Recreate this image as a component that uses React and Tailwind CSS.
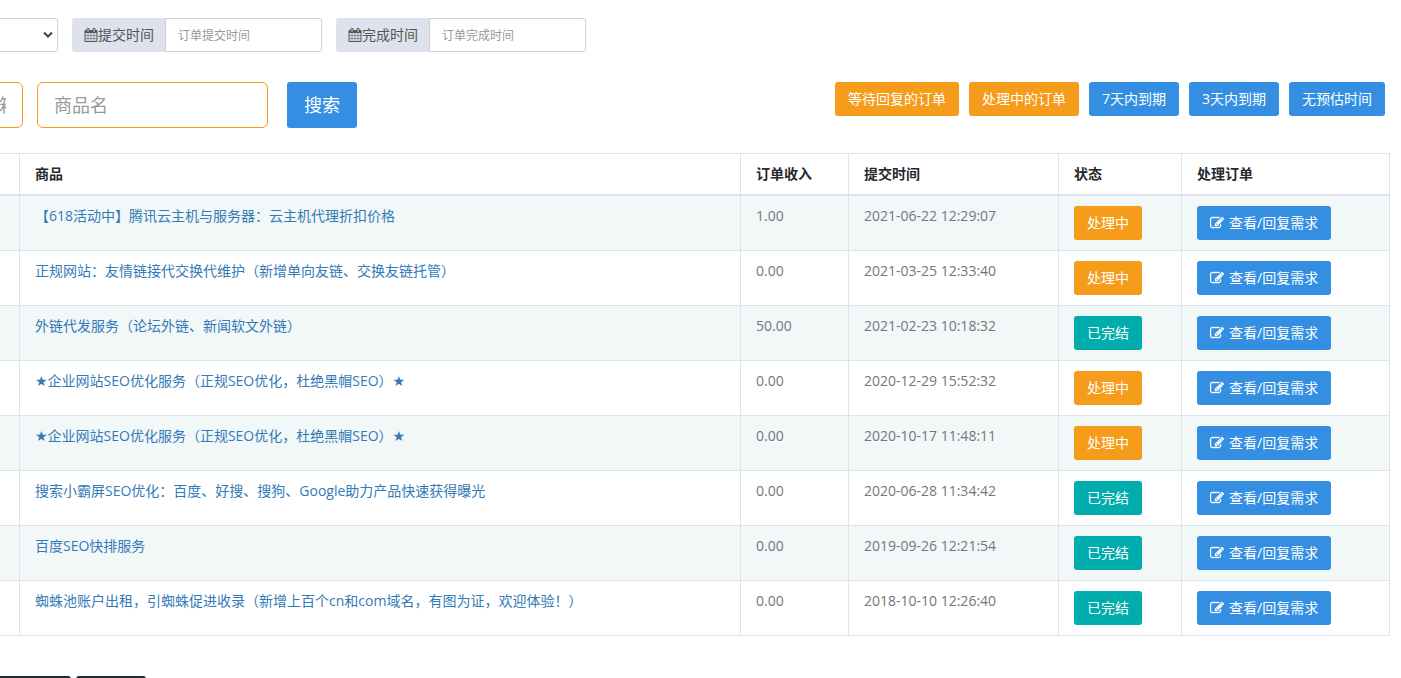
import React, { useState } from 'react';

const orders = [
  { id: 1, title: '【618活动中】腾讯云主机与服务器：云主机代理折扣价格', income: '1.00', time: '2021-06-22 12:29:07', done: false },
  { id: 2, title: '正规网站：友情链接代交换代维护（新增单向友链、交换友链托管）', income: '0.00', time: '2021-03-25 12:33:40', done: false },
  { id: 3, title: '外链代发服务（论坛外链、新闻软文外链）', income: '50.00', time: '2021-02-23 10:18:32', done: true },
  { id: 4, title: '★企业网站SEO优化服务（正规SEO优化，杜绝黑帽SEO）★', income: '0.00', time: '2020-12-29 15:52:32', done: false },
  { id: 5, title: '★企业网站SEO优化服务（正规SEO优化，杜绝黑帽SEO）★', income: '0.00', time: '2020-10-17 11:48:11', done: false },
  { id: 6, title: '搜索小霸屏SEO优化：百度、好搜、搜狗、Google助力产品快速获得曝光', income: '0.00', time: '2020-06-28 11:34:42', done: true },
  { id: 7, title: '百度SEO快排服务', income: '0.00', time: '2019-09-26 12:21:54', done: true },
  { id: 8, title: '蜘蛛池账户出租，引蜘蛛促进收录（新增上百个cn和com域名，有图为证，欢迎体验！）', income: '0.00', time: '2018-10-10 12:26:40', done: true },
];

const quickFilters = [
  { label: '等待回复的订单', color: 'bg-[#f59c1a]' },
  { label: '处理中的订单', color: 'bg-[#f59c1a]' },
  { label: '7天内到期', color: 'bg-[#348fe2]' },
  { label: '3天内到期', color: 'bg-[#348fe2]' },
  { label: '无预估时间', color: 'bg-[#348fe2]' },
];

const CalendarIcon = () => (
  <svg className="w-[14px] h-[14px] shrink-0" viewBox="0 0 1792 1792" fill="currentColor" aria-hidden="true">
    <path d="M192 1664h288v-288h-288v288zm352 0h320v-288h-320v288zm-352-352h288v-320h-288v320zm352 0h320v-320h-320v320zm-352-384h288v-288h-288v288zm736 736h320v-288h-320v288zm-384-736h320v-288h-320v288zm768 736h288v-288h-288v288zm-384-352h320v-320h-320v320zm-352-864v-288q0-13-9.5-22.5t-22.5-9.5h-64q-13 0-22.5 9.5t-9.5 22.5v288q0 13 9.5 22.5t22.5 9.5h64q13 0 22.5-9.5t9.5-22.5zm736 864h288v-320h-288v320zm-384-384h320v-288h-320v288zm384 0h288v-288h-288v288zm32-480v-288q0-13-9.5-22.5t-22.5-9.5h-64q-13 0-22.5 9.5t-9.5 22.5v288q0 13 9.5 22.5t22.5 9.5h64q13 0 22.5-9.5t9.5-22.5zm384-64v1280q0 52-38 90t-90 38h-1408q-52 0-90-38t-38-90v-1280q0-52 38-90t90-38h128v-96q0-66 47-113t113-47h64q66 0 113 47t47 113v96h384v-96q0-66 47-113t113-47h64q66 0 113 47t47 113v96h128q52 0 90 38t38 90z" />
  </svg>
);

const EditIcon = () => (
  <svg
    className="w-[14px] h-[14px] shrink-0"
    viewBox="0 0 1792 1792"
    fill="currentColor"
    stroke="currentColor"
    strokeWidth="50"
    aria-hidden="true"
  >
    <path d="M888 1184l116-116-152-152-116 116v56h96v96h56zm440-720q-16-16-33 1l-350 350q-17 17-1 33t33-1l350-350q17-17 1-33zm80 594v190q0 119-84.5 203.5t-203.5 84.5h-832q-119 0-203.5-84.5t-84.5-203.5v-832q0-119 84.5-203.5t203.5-84.5h832q63 0 117 25 15 7 18 23 3 17-9 29l-49 49q-14 14-32 8-23-6-45-6h-832q-66 0-113 47t-47 113v832q0 66 47 113t113 47h832q66 0 113-47t47-113v-126q0-13 9-22l64-64q15-15 35-7t20 29zm-96-738l288 288-672 672h-288v-288zm444 132l-92 92-288-288 92-92q28-28 68-28t68 28l152 152q28 28 28 68t-28 68z" />
  </svg>
);

const DateFilter = ({ id, label, placeholder }) => (
  <div className="flex h-[34px] w-[250px]">
    <label htmlFor={id} className="flex items-center px-3 rounded-l-[3px] bg-[#dee2ed] text-[#555555]">
      <CalendarIcon />
      {label}
    </label>
    <input
      id={id}
      type="text"
      placeholder={placeholder}
      className="flex-1 min-w-0 -ml-px px-3 pt-[2px] text-xs rounded-r-[3px] border border-[#ccd0d8] bg-white placeholder-[#999999] focus:outline-none"
    />
  </div>
);

const headCell = 'px-[15px] py-[10px] leading-5 text-left font-bold text-[#242a30] border border-b-2 border-[#dee2ed]';
const bodyCell = 'px-[15px] py-[10px] align-top leading-5 border border-[#dee2ed]';

const App = () => {
  const [product, setProduct] = useState('');

  return (
    <div
      className="h-screen overflow-hidden bg-white text-sm text-[#6f7780] font-['Open_Sans','DejaVu_Sans','Noto_Sans_CJK_SC',sans-serif]"
      lang="zh-CN"
    >
      {/* Filters */}
      <div className="flex gap-[14px] pt-[18px]">
        <div className="relative -ml-40 w-[218px]">
          <select
            aria-label="订单状态"
            className="appearance-none w-full h-[34px] px-3 rounded-[3px] border border-[#ccd0d8] bg-white"
          >
            <option value=""></option>
            <option value="doing">处理中</option>
            <option value="done">已完结</option>
          </select>
          <svg
            className="absolute right-[5px] top-[13px] w-[10px] h-2 pointer-events-none text-[#444444]"
            viewBox="0 0 10 8"
            fill="none"
            stroke="currentColor"
            strokeWidth="2"
          >
            <path d="M1 1.5l4 4 4-4" />
          </svg>
        </div>
        <DateFilter id="submit-time" label="提交时间" placeholder="订单提交时间" />
        <DateFilter id="finish-time" label="完成时间" placeholder="订单完成时间" />
      </div>

      {/* Search */}
      <div className="flex items-start justify-between pt-[30px] pr-4">
        <div className="flex">
          <input
            type="text"
            aria-label="用户邮箱"
            placeholder="请输入下单用户QQ或邮箱"
            className="-ml-52 mr-[14px] w-[231px] h-[46px] px-4 text-lg rounded-md border border-[#f59c1a] placeholder-[#999999] focus:outline-none"
          />
          <input
            type="text"
            aria-label="商品名"
            placeholder="商品名"
            value={product}
            onChange={(e) => setProduct(e.target.value)}
            className="mr-[19px] w-[231px] h-[46px] px-4 text-lg rounded-md border border-[#f59c1a] placeholder-[#999999] focus:outline-none"
          />
          <button type="button" className="h-[46px] w-[70px] rounded-[3px] bg-[#348fe2] text-lg text-white">
            搜索
          </button>
        </div>
        <div className="flex gap-[10px]">
          {quickFilters.map((item) => (
            <button key={item.label} type="button" className={`h-[34px] px-[13px] rounded-[3px] text-white ${item.color}`}>
              {item.label}
            </button>
          ))}
        </div>
      </div>

      {/* Orders */}
      <div className="mt-[25px] -ml-10 mr-[11px]">
        <table className="w-full table-fixed border-collapse">
          <colgroup>
            <col className="w-[59px]" />
            <col />
            <col className="w-[108px]" />
            <col className="w-[210px]" />
            <col className="w-[123px]" />
            <col className="w-[208px]" />
          </colgroup>
          <thead>
            <tr>
              <th className={headCell}></th>
              <th className={headCell}>商品</th>
              <th className={headCell}>订单收入</th>
              <th className={headCell}>提交时间</th>
              <th className={headCell}>状态</th>
              <th className={headCell}>处理订单</th>
            </tr>
          </thead>
          <tbody>
            {orders.map((order) => (
              <tr key={order.id} className="odd:bg-[#f2f7f8]">
                <td className={bodyCell}></td>
                <td className={bodyCell}>
                  <a href="#" className="text-[#337ab7]">{order.title}</a>
                </td>
                <td className={bodyCell}>{order.income}</td>
                <td className={bodyCell}>{order.time}</td>
                <td className={bodyCell}>
                  <button
                    type="button"
                    className={`block h-[34px] px-[13px] rounded-[3px] text-white ${order.done ? 'bg-[#00acac]' : 'bg-[#f59c1a]'}`}
                  >
                    {order.done ? '已完结' : '处理中'}
                  </button>
                </td>
                <td className={bodyCell}>
                  <button type="button" className="flex items-center gap-[5px] h-[34px] px-[13px] rounded-[3px] bg-[#348fe2] text-white">
                    <EditIcon />
                    查看/回复需求
                  </button>
                </td>
              </tr>
            ))}
          </tbody>
        </table>
      </div>

      {/* Batch actions */}
      <div className="flex gap-[5px] mt-10">
        <button type="button" aria-label="批量处理" className="-ml-5 w-[91px] h-[34px] rounded-[3px] bg-[#242a30]"></button>
        <button type="button" aria-label="导出" className="w-[70px] h-[34px] rounded-[3px] bg-[#242a30]"></button>
      </div>
    </div>
  );
};

export default App;
